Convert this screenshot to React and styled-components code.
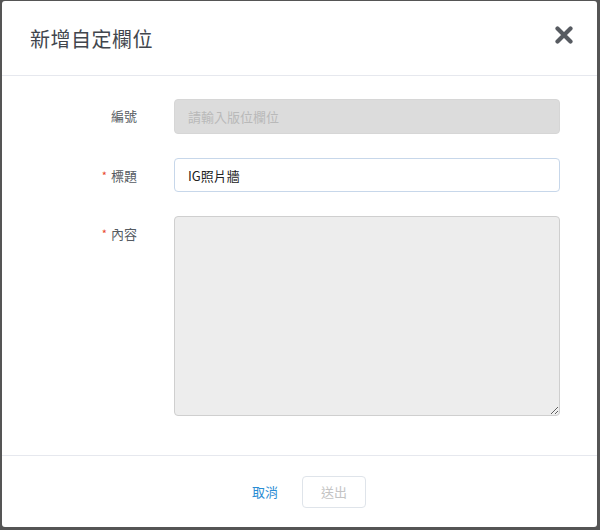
import styled, { createGlobalStyle } from "styled-components";

const GlobalStyle = createGlobalStyle`
  html, body {
    margin: 0;
    padding: 0;
    background: #555;
  }
  body {
    font-family: "Noto Sans CJK TC", "Noto Sans", sans-serif;
  }
`;

const Frame = styled.div`
  width: 600px;
  height: 530px;
  box-sizing: border-box;
  padding: 1px 3px 3px 2px;
  background: #555;
`;

const Modal = styled.div`
  height: 100%;
  background: #fff;
  border-radius: 3px;
  display: flex;
  flex-direction: column;
`;

const Header = styled.div`
  height: 74px;
  flex-shrink: 0;
  border-bottom: 1px solid #e6e8ee;
  display: flex;
  align-items: center;
  justify-content: space-between;
  padding: 0 24px 0 28px;
`;

const Title = styled.h2`
  margin: 0;
  font-size: 20px;
  font-weight: 400;
  color: #41464d;
  letter-spacing: 0.5px;
`;

const CloseButton = styled.button`
  border: 0;
  background: none;
  padding: 0;
  width: 18px;
  height: 18px;
  margin-top: -6px;
  cursor: pointer;
  display: flex;
`;

const Body = styled.div`
  flex: 1;
  padding: 23px 37px 0 0;
  display: flex;
  flex-direction: column;
  gap: 24px;
`;

const Row = styled.div`
  display: grid;
  grid-template-columns: 135px 1fr;
  column-gap: 37px;
  align-items: start;
`;

const Label = styled.label`
  text-align: right;
  font-size: 13px;
  line-height: 34px;
  height: 34px;
  color: #555b62;
`;

const Star = styled.span`
  color: #e8452c;
  font-size: 11px;
  margin-right: 4px;
  vertical-align: 1px;
`;

const Input = styled.input`
  box-sizing: border-box;
  width: 100%;
  height: ${(p) => (p.disabled ? "35px" : "34px")};
  border: 1px solid ${(p) => (p.disabled ? "#d6d6d6" : "#c7d7ea")};
  border-radius: 4px;
  background: ${(p) => (p.disabled ? "#dcdcdc" : "#fff")};
  padding: 0 13px;
  font-family: inherit;
  font-size: 13px;
  color: #222;
  outline: none;
  &::placeholder {
    color: #b9b9b9;
  }
`;

const TextArea = styled.textarea`
  box-sizing: border-box;
  display: block;
  width: 100%;
  height: 200px;
  border: 1px solid #cfcfcf;
  border-radius: 4px;
  background: #ededed;
  font-family: inherit;
  font-size: 13px;
  outline: none;
  resize: vertical;
`;

const Footer = styled.div`
  height: 71px;
  flex-shrink: 0;
  border-top: 1px solid #e6e8ee;
  display: flex;
  align-items: center;
  justify-content: center;
  gap: 5px;
`;

const Button = styled.button`
  box-sizing: border-box;
  width: 64px;
  height: 32px;
  border-radius: 4px;
  font-family: inherit;
  font-size: 13px;
  background: #fff;
  border: 1px solid ${(p) => (p.$link ? "transparent" : "#dfe4ea")};
  color: ${(p) => (p.$link ? "#2a8dd4" : "#c4c4c4")};
  cursor: pointer;
`;

export default function App() {
  return (
    <Frame>
      <GlobalStyle />
      <Modal>
        <Header>
          <Title>新增自定欄位</Title>
          <CloseButton aria-label="close">
            <svg width="18" height="18" viewBox="0 0 18 18">
              <path
                d="M2.5 2.5 L15.5 15.5 M15.5 2.5 L2.5 15.5"
                stroke="#575b61"
                strokeWidth="4.2"
                strokeLinecap="round"
              />
            </svg>
          </CloseButton>
        </Header>
        <Body>
          <Row>
            <Label>編號</Label>
            <Input disabled placeholder="請輸入版位欄位" />
          </Row>
          <Row>
            <Label>
              <Star>*</Star>標題
            </Label>
            <Input defaultValue="IG照片牆" />
          </Row>
          <Row>
            <Label>
              <Star>*</Star>內容
            </Label>
            <TextArea />
          </Row>
        </Body>
        <Footer>
          <Button $link>取消</Button>
          <Button disabled>送出</Button>
        </Footer>
      </Modal>
    </Frame>
  );
}
